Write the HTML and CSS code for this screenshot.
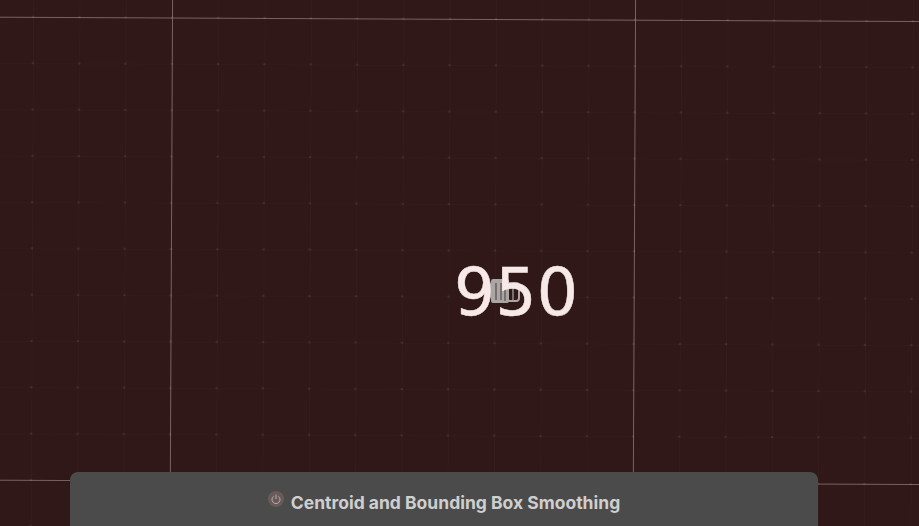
FILE: index.html
```html
<!DOCTYPE html>
<html lang="en">
<head>
<meta charset="utf-8">
<title>Centroid and Bounding Box Smoothing</title>
<link rel="stylesheet" href="styles.css">
</head>
<body>
<main class="stage">
  <svg class="grid" width="919" height="526" viewBox="0 0 919 526" aria-hidden="true">
    <defs>
      <pattern id="minor" width="46.3" height="46.3" patternUnits="userSpaceOnUse" patternTransform="translate(172 17.5) rotate(0.27)">
        <path class="minor-line" d="M0 0H46.3M0 0V46.3"/>
        <circle class="node" cx="0" cy="0" r="1.3"/>
        <circle class="node" cx="46.3" cy="0" r="1.3"/>
        <circle class="node" cx="0" cy="46.3" r="1.3"/>
        <circle class="node" cx="46.3" cy="46.3" r="1.3"/>
      </pattern>
      <pattern id="major" width="463" height="463" patternUnits="userSpaceOnUse" patternTransform="translate(172 17.5) rotate(0.27)">
        <path class="major-line" d="M0 0H463M0 0V463"/>
      </pattern>
    </defs>
    <rect width="919" height="526" fill="url(#minor)"/>
    <rect width="919" height="526" fill="url(#major)"/>
  </svg>
  <svg class="marker" width="32" height="30" viewBox="0 0 32 30" aria-hidden="true">
    <rect class="marker-body" x="2" y="3" width="18" height="24" rx="2"/>
    <path class="marker-bars" d="M7 7V24M12 7V24M16 9V25"/>
    <rect class="marker-cap" x="18" y="7" width="12" height="18" rx="3"/>
    <path class="marker-bars" d="M24 12V24"/>
  </svg>
  <div class="value">950</div>
  <footer class="panel">
    <svg class="power" width="16" height="16" viewBox="0 0 16 16" aria-hidden="true">
      <circle class="power-bg" cx="8" cy="8" r="8"/>
      <path class="power-glyph" d="M5.7 5.3a4 4 0 1 0 4.6 0M8 3.6V8"/>
    </svg>
    <span class="panel-title">Centroid and Bounding Box Smoothing</span>
  </footer>
</main>
</body>
</html>
```
FILE: styles.css
```css
html, body {
  margin: 0;
  height: 100%;
  background: #2f1817;
  overflow: hidden;
}

.stage {
  position: relative;
  width: 919px;
  height: 526px;
  overflow: hidden;
  background: #2f1817;
  font-family: "Inter", "Liberation Sans", sans-serif;
}

.grid {
  position: absolute;
  left: 0;
  top: 0;
  display: block;
  filter: blur(0.4px);
}

.minor-line {
  fill: none;
  stroke: rgba(255, 255, 255, 0.026);
  stroke-width: 1.2;
}

.node {
  fill: rgba(255, 255, 255, 0.08);
}

.major-line {
  fill: none;
  stroke: rgba(255, 235, 230, 0.34);
  stroke-width: 2;
}

.marker {
  position: absolute;
  left: 489px;
  top: 276px;
  filter: blur(0.5px);
}

.marker-body {
  fill: #aaa6a5;
}

.marker-cap {
  fill: none;
  stroke: #aaa6a5;
  stroke-width: 2;
}

.marker-bars {
  fill: none;
  stroke: #77706f;
  stroke-width: 2;
}

.value {
  position: absolute;
  left: 454px;
  top: 255px;
  font-family: "DejaVu Sans", sans-serif;
  font-size: 65px;
  font-weight: 400;
  line-height: 76px;
  color: #f6e9e7;
  -webkit-text-stroke: 0.5px #f6e9e7;
  filter: blur(0.4px);
}

.panel {
  position: absolute;
  left: 70px;
  top: 472px;
  width: 748px;
  height: 54px;
  box-sizing: border-box;
  display: flex;
  justify-content: center;
  align-items: center;
  gap: 7px;
  padding-top: 8px;
  background: #4b4b4b;
  border-radius: 8px 8px 0 0;
}

.power {
  margin-top: -8px;
  flex: none;
}

.power-bg {
  fill: #6a5a5a;
}

.power-glyph {
  fill: none;
  stroke: #b5adad;
  stroke-width: 1;
}

.panel-title {
  font-size: 17.5px;
  font-weight: 700;
  color: #cfcfcf;
  line-height: 22px;
}
```
